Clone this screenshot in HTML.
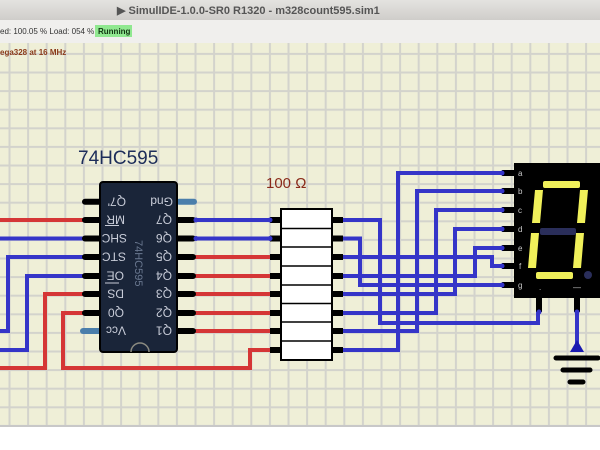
<!DOCTYPE html>
<html><head><meta charset="utf-8"><style>
html,body{margin:0;padding:0;width:600px;height:450px;overflow:hidden;background:#fff;font-family:"Liberation Sans",sans-serif}
</style></head><body>
<svg width="600" height="450" xmlns="http://www.w3.org/2000/svg" style="display:block">
<defs>
<linearGradient id="tb" x1="0" y1="0" x2="0" y2="1"><stop offset="0" stop-color="#e4e3e0"/><stop offset="1" stop-color="#cfcdca"/></linearGradient>
<pattern id="grid" x="8.5" y="15.7" width="18.6" height="18.6" patternUnits="userSpaceOnUse">
<rect width="18.6" height="18.6" fill="#efefd7"/>
<rect x="0" y="0" width="2" height="18.6" fill="#d3d3cc"/>
<rect x="0" y="0" width="18.6" height="2" fill="#d3d3cc"/>
</pattern>
</defs>
<rect x="0" y="0" width="600" height="20" fill="url(#tb)"/>
<text x="117" y="14" font-size="11" font-weight="bold" fill="#555">▶ SimulIDE-1.0.0-SR0 R1320 - m328count595.sim1</text>
<rect x="0" y="20" width="600" height="23" fill="#f0efed"/>
<text x="0" y="34" font-size="8" fill="#333">ed: 100.05 %   Load: 054 %</text>
<rect x="95" y="25" width="37" height="12" fill="#90e890"/>
<text x="98" y="34" font-size="8" font-weight="bold" fill="#113311">Running</text>
<rect x="0" y="43" width="600" height="382" fill="url(#grid)"/>
<rect x="0" y="425" width="600" height="2" fill="#c8c8c8"/>
<text x="0" y="55" font-size="8" font-weight="bold" fill="#8a3a1a">ega328 at 16 MHz</text>

<g fill="none" stroke-width="4" stroke-linejoin="miter">
<path d="M0 220H84" stroke="#d53636"/>
<path d="M0 238.5H84" stroke="#3535c8"/>
<path d="M84 257H8V331H0" stroke="#3535c8"/>
<path d="M84 276H27V350H0" stroke="#3535c8"/>
<path d="M84 294H45V368H0" stroke="#d53636"/>
<path d="M84 313H63V368H250V350H272" stroke="#d53636"/>
<path d="M194 220H272M194 238.5H272" stroke="#3535c8"/>
<path d="M194 257H272M194 276H272M194 294H272M194 313H272M194 331H272" stroke="#d53636"/>
<g stroke="#3535c8">
<path d="M340 220H380V323H538V312"/>
<path d="M340 238.5H360V285H502"/>
<path d="M340 257H492V266H502"/>
<path d="M340 276H475V248H502"/>
<path d="M340 294H455V229H502"/>
<path d="M340 313H436V210H502"/>
<path d="M340 331H417V191H502"/>
<path d="M340 350H398V173H502"/>
<path d="M577 310V350"/>
</g>
</g>

<text x="78" y="164" font-size="19" fill="#1d2d5a">74HC595</text>
<g stroke-linecap="round" stroke-width="6">
<path d="M85 201.7H100M85 220H100M85 238.5H100M85 257H100M85 276H100M85 294H100M85 313H100" stroke="#000"/>
<path d="M178 220H193M178 238.5H193M178 257H193M178 276H193M178 294H193M178 313H193M178 331H193" stroke="#000"/>
<path d="M179 201.7H194" stroke="#4a7eab"/>
<path d="M83 331H100" stroke="#4a7eab"/>
</g>
<rect x="100" y="182" width="77" height="170" rx="3" fill="#1a2539" stroke="#000" stroke-width="2"/>
<path d="M131 352A9 9 0 0 1 149 352" fill="none" stroke="#8a8a80" stroke-width="1.5"/>
<g font-size="12" fill="#c8ccd8">
<g transform="rotate(180 113 201.7)"><text x="100" y="206">Q7'</text></g>
<g transform="rotate(180 113 220)"><text x="101" y="224.5">MR</text></g>
<g transform="rotate(180 113 238.5)"><text x="99" y="243">SHC</text></g>
<g transform="rotate(180 113 257)"><text x="100" y="261.5">STC</text></g>
<g transform="rotate(180 113 276)"><text x="102" y="280.5">OE</text></g>
<g transform="rotate(180 113 294)"><text x="102" y="298.5">DS</text></g>
<g transform="rotate(180 113 313)"><text x="102" y="317.5">Q0</text></g>
<g transform="rotate(180 113 331)"><text x="100" y="335.5">Vcc</text></g>
<g transform="rotate(180 161 201.7)"><text x="149" y="206">Gnd</text></g>
<g transform="rotate(180 163 220)"><text x="154" y="224.5">Q7</text></g>
<g transform="rotate(180 163 238.5)"><text x="154" y="243">Q6</text></g>
<g transform="rotate(180 163 257)"><text x="154" y="261.5">Q5</text></g>
<g transform="rotate(180 163 276)"><text x="154" y="280.5">Q4</text></g>
<g transform="rotate(180 163 294)"><text x="154" y="298.5">Q3</text></g>
<g transform="rotate(180 163 313)"><text x="154" y="317.5">Q2</text></g>
<g transform="rotate(180 163 331)"><text x="154" y="335.5">Q1</text></g>
</g>
<path d="M105 225.5H119M105 283H119" stroke="#c8ccd8" stroke-width="1"/>
<g transform="rotate(90 139 267)"><text x="112" y="271" font-size="11" fill="#6a7890">74HC595</text></g>

<text x="266" y="188" font-size="15" fill="#8a2a1a">100 Ω</text>
<g stroke="#000" stroke-width="6">
<path d="M270 220H281M270 238.5H281M270 257H281M270 276H281M270 294H281M270 313H281M270 331H281M270 350H281"/>
<path d="M332 220H343M332 238.5H343M332 257H343M332 276H343M332 294H343M332 313H343M332 331H343M332 350H343"/>
</g>
<g fill="#3535c8"><circle cx="196" cy="220" r="2.5"/><circle cx="196" cy="238.5" r="2.5"/><circle cx="270" cy="220" r="2.5"/><circle cx="270" cy="238.5" r="2.5"/></g>
<rect x="281" y="209" width="51" height="151" fill="#fff" stroke="#000" stroke-width="2"/>
<path d="M281 228.5H332M281 247H332M281 266H332M281 285H332M281 303.5H332M281 322H332M281 341H332" stroke="#000" stroke-width="1.5"/>

<g stroke="#000" stroke-width="6">
<path d="M502 173H514M502 191H514M502 210H514M502 229H514M502 248H514M502 266H514M502 285H514"/>
<path d="M539 297V312M577 297V312"/>
</g>
<g fill="#3535c8"><circle cx="502" cy="173" r="2.5"/><circle cx="502" cy="191" r="2.5"/><circle cx="502" cy="210" r="2.5"/><circle cx="502" cy="229" r="2.5"/><circle cx="502" cy="248" r="2.5"/><circle cx="502" cy="266" r="2.5"/><circle cx="502" cy="285" r="2.5"/><circle cx="539" cy="312" r="2.5"/><circle cx="577" cy="312" r="2.5"/></g>
<rect x="514" y="163" width="86" height="135" fill="#000"/>
<g font-size="8" fill="#c8c8c8">
<text x="518" y="176">a</text><text x="518" y="194">b</text><text x="518" y="213">c</text><text x="518" y="232">d</text><text x="518" y="251">e</text><text x="519" y="269">f</text><text x="518" y="288">g</text>
<text x="539" y="290">.</text><text x="573" y="290">—</text>
</g>
<g fill="#f0f05a">
<rect x="543" y="181" width="37" height="7" rx="2"/>
<polygon points="580,190 588,190 585,223 577,223"/>
<polygon points="535,190 543,190 540,223 532,223"/>
<polygon points="531,233 539,233 536,268 528,268"/>
<polygon points="576,233 584,233 581,268 573,268"/>
<rect x="536" y="272" width="37" height="7" rx="2"/>
</g>
<rect x="540" y="228" width="36" height="7" rx="2" fill="#2a2e5a"/>
<circle cx="588" cy="275" r="4" fill="#2a2e5a"/>

<path d="M570 352L577 340L584 352Z" fill="#1a1ab0"/>
<g stroke="#000" stroke-width="5" stroke-linecap="round">
<path d="M556 358H598M563 370H590M570 382H583"/>
</g>
</svg>
</body></html>
